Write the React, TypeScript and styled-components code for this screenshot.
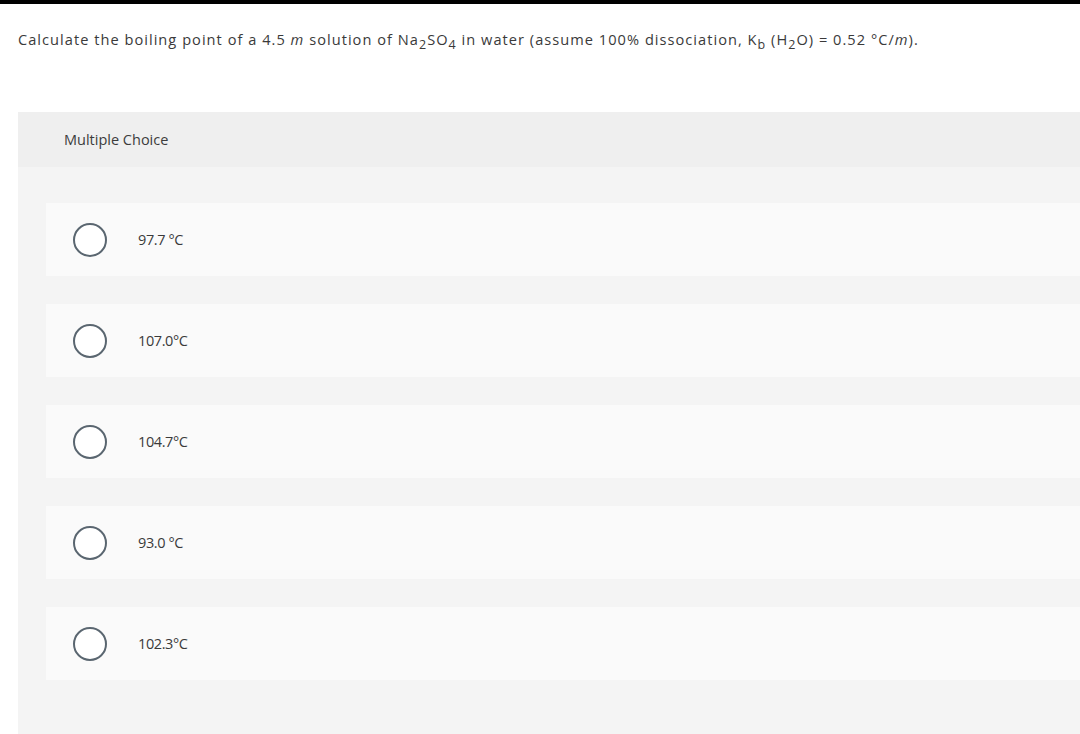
import React from "react";
import styled, { createGlobalStyle } from "styled-components";

const Global = createGlobalStyle`
  html, body { margin: 0; padding: 0; background: #ffffff; }
  body { font-family: "Open Sans", "Liberation Sans", sans-serif; color: #333; }
`;

const Page = styled.div`
  display: flex;
  flex-direction: column;
  min-height: 734px;
  overflow: hidden;
`;

const TopBar = styled.div`
  height: 4px;
  background: #000;
`;

const Question = styled.p`
  margin: 0;
  padding: 25px 0 0 18px;
  height: 19px;
  font-size: 14.6px;
  line-height: 20px;
  letter-spacing: 1.03px;
  color: #3a3a3a;
  white-space: nowrap;
  sub {
    font-size: 12.5px;
    vertical-align: -4px;
    line-height: 0;
  }
  em { font-style: italic; }
`;

const Panel = styled.section`
  margin: 64px 0 0 18px;
  flex: 1;
  display: flex;
  flex-direction: column;
  background: #f4f4f4;
`;

const PanelHeader = styled.div`
  height: 55px;
  background: #efefef;
  display: flex;
  align-items: center;
  padding-left: 46px;
  font-size: 14.5px;
  color: #3c3c3c;
`;

const Options = styled.div`
  display: flex;
  flex-direction: column;
  gap: 28px;
  padding: 36px 0 60px 28px;
`;

const Option = styled.label`
  height: 73px;
  background: #fafafa;
  display: flex;
  align-items: center;
  padding-left: 27px;
  gap: 31px;
  cursor: pointer;
`;

const Radio = styled.span`
  width: 30px;
  height: 30px;
  border-radius: 50%;
  border: 2px solid #5a6670;
  background: #fff;
  flex-shrink: 0;
`;

const OptionText = styled.span`
  font-size: 14.5px;
  color: #3a3a3a;
  letter-spacing: -0.4px;
`;

const choices = ["97.7 °C", "107.0°C", "104.7°C", "93.0 °C", "102.3°C"];

export default function App() {
  return (
    <>
      <Global />
      <Page>
        <TopBar />
        <Question>
          Calculate the boiling point of a 4.5 <em>m</em> solution of Na<sub>2</sub>SO<sub>4</sub> in water
          (assume 100% dissociation, K<sub>b</sub> (H<sub>2</sub>O) = 0.52 °C/<em>m</em>).
        </Question>
        <Panel>
          <PanelHeader>Multiple Choice</PanelHeader>
          <Options>
            {choices.map((c) => (
              <Option key={c}>
                <Radio />
                <OptionText>{c}</OptionText>
              </Option>
            ))}
          </Options>
        </Panel>
      </Page>
    </>
  );
}
